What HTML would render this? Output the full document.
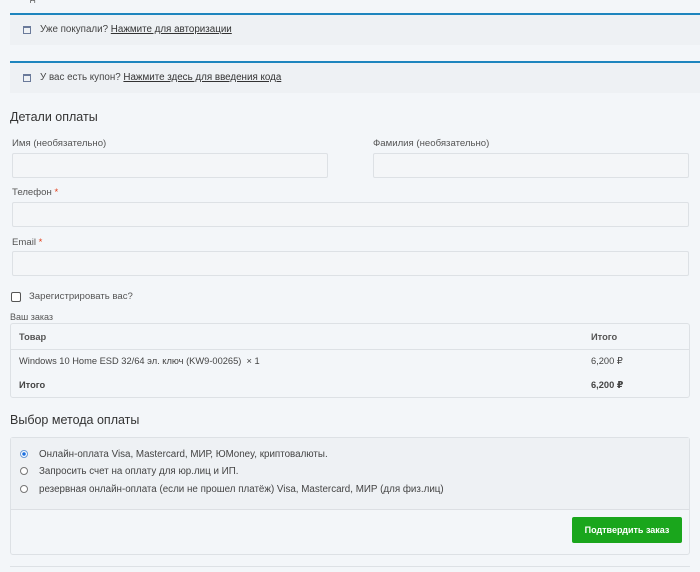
<!DOCTYPE html>
<html><head><meta charset="utf-8"><style>
*{box-sizing:border-box;margin:0;padding:0}
body{width:700px;height:571px;overflow:hidden;background:#f3f6f9;font-family:"Liberation Sans","DejaVu Sans",sans-serif;color:#444;position:relative;font-size:9px}
.a{position:absolute;white-space:nowrap}
.notice{position:absolute;left:10px;width:690px;background:#eef1f4;border-top:2px solid #1e85be}
.notice .ic{position:absolute;left:13px;width:8px;height:8px;border:1.5px solid #6a7a9a;border-top-width:2.5px}
.notice span{position:absolute;left:30px;font-size:9.8px;color:#444;white-space:nowrap}
.notice u{color:#333}
.lbl{position:absolute;font-size:9.6px;color:#555;white-space:nowrap}
.inp{position:absolute;height:25px;background:#f4f6f8;border:1px solid #dde1e5;border-radius:2px}
.req{color:#e2401c}
.box{position:absolute;border:1px solid #dde1e5;border-radius:3px}
.t{font-size:9.3px}
</style></head><body>
<div class="a" style="left:30px;top:-7px;font-size:9px;color:#555">д</div>
<div class="notice" style="top:13px;height:32px"><div class="ic" style="top:11px"></div><span style="top:9px">Уже покупали? <u>Нажмите для авторизации</u></span></div>
<div class="notice" style="top:61px;height:32px"><div class="ic" style="top:11px"></div><span style="top:9px">У вас есть купон? <u>Нажмите здесь для введения кода</u></span></div>
<div class="a" style="left:10px;top:110px;font-size:12.5px;color:#333">Детали оплаты</div>
<div class="lbl" style="left:12px;top:138px">Имя (необязательно)</div>
<div class="lbl" style="left:373px;top:138px">Фамилия (необязательно)</div>
<div class="inp" style="left:12px;top:153px;width:316px"></div>
<div class="inp" style="left:373px;top:153px;width:316px"></div>
<div class="lbl" style="left:12px;top:187px">Телефон <span class="req">*</span></div>
<div class="inp" style="left:12px;top:202px;width:677px"></div>
<div class="lbl" style="left:12px;top:237px">Email <span class="req">*</span></div>
<div class="inp" style="left:12px;top:251px;width:677px"></div>
<div class="a" style="left:11px;top:292px;width:10px;height:10px;border:1px solid #555;border-radius:2px;background:#fff"></div>
<div class="lbl" style="left:29px;top:291px">Зарегистрировать вас?</div>
<div class="lbl" style="left:10px;top:312px;font-size:9px">Ваш заказ</div>
<div class="box" style="left:10px;top:323px;width:680px;height:75px">
 <div class="a t" style="left:8px;top:8px;font-weight:bold;color:#555">Товар</div>
 <div class="a t" style="left:580px;top:8px;font-weight:bold;color:#555">Итого</div>
 <div class="a" style="left:0;top:25px;width:678px;border-top:1px solid #dde1e5"></div>
 <div class="a t" style="left:8px;top:32px;color:#444">Windows 10 Home ESD 32/64 эл. ключ (KW9-00265) &nbsp;× 1</div>
 <div class="a t" style="left:580px;top:32px;color:#444">6,200 ₽</div>
 <div class="a t" style="left:8px;top:56px;font-weight:bold;color:#444">Итого</div>
 <div class="a t" style="left:580px;top:56px;font-weight:bold;color:#444">6,200 ₽</div>
</div>
<div class="a" style="left:10px;top:413px;font-size:12.5px;color:#333">Выбор метода оплаты</div>
<div class="box" style="left:10px;top:437px;width:680px;height:118px;background:#f3f6f9">
 <div class="a" style="left:0;top:0;width:678px;height:71px;background:#eef1f4"></div>
 <div class="a" style="left:9px;top:12px;width:8px;height:8px;border-radius:50%;border:1px solid #6a9bd8;background:radial-gradient(#1a6fe0 40%,#fff 45%)"></div>
 <div class="a" style="left:28px;top:11px;font-size:9.8px">Онлайн-оплата Visa, Mastercard, МИР, ЮMoney, криптовалюты.</div>
 <div class="a" style="left:9px;top:29px;width:8px;height:8px;border-radius:50%;border:1px solid #777;background:#fff"></div>
 <div class="a" style="left:28px;top:28px;font-size:9.8px">Запросить счет на оплату для юр.лиц и ИП.</div>
 <div class="a" style="left:9px;top:47px;width:8px;height:8px;border-radius:50%;border:1px solid #777;background:#fff"></div>
 <div class="a" style="left:28px;top:46px;font-size:9.8px">резервная онлайн-оплата (если не прошел платёж) Visa, Mastercard, МИР (для физ.лиц)</div>
 <div class="a" style="left:0;top:71px;width:678px;border-top:1px solid #dcdfe3"></div>
 <div class="a" style="left:561px;top:79px;width:110px;height:26px;background:#1aa61c;border-radius:2px;color:#fff;font-weight:bold;font-size:9px;text-align:center;line-height:26px">Подтвердить заказ</div>
</div>
<div class="a" style="left:10px;top:566px;width:680px;height:6px;border-top:1px solid #dde1e5"></div>
</body></html>
